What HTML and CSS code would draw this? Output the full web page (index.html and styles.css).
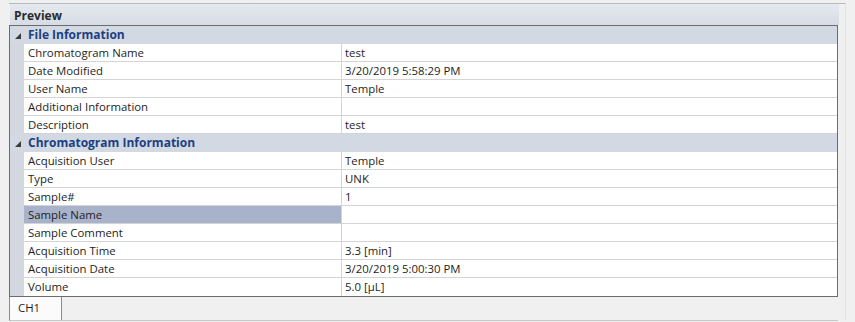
FILE: index.html
```html
<!DOCTYPE html>
<html lang="en">

<head>
    <meta charset="UTF-8" />
    <title>Preview</title>
    <link rel="stylesheet" href="styles.css">
</head>

<body>
    <div class="frame">
        <div class="title">Preview</div>
        <div class="grid">
            <div class="cat">
                <span class="gutter"><svg width="6" height="6" viewBox="0 0 6 6"><polygon points="6,0 6,6 0,6" fill="#3c3c3c"/></svg></span>
                <span class="cat-text">File Information</span>
            </div>
            <div class="row"><span class="gutter"></span><span class="name">Chromatogram Name</span><span class="value">test</span></div>
            <div class="row"><span class="gutter"></span><span class="name">Date Modified</span><span class="value">3/20/2019 5:58:29 PM</span></div>
            <div class="row"><span class="gutter"></span><span class="name">User Name</span><span class="value">Temple</span></div>
            <div class="row"><span class="gutter"></span><span class="name">Additional Information</span><span class="value"></span></div>
            <div class="row"><span class="gutter"></span><span class="name">Description</span><span class="value">test</span></div>
            <div class="cat">
                <span class="gutter"><svg width="6" height="6" viewBox="0 0 6 6"><polygon points="6,0 6,6 0,6" fill="#3c3c3c"/></svg></span>
                <span class="cat-text">Chromatogram Information</span>
            </div>
            <div class="row"><span class="gutter"></span><span class="name">Acquisition User</span><span class="value">Temple</span></div>
            <div class="row"><span class="gutter"></span><span class="name">Type</span><span class="value">UNK</span></div>
            <div class="row"><span class="gutter"></span><span class="name">Sample#</span><span class="value">1</span></div>
            <div class="row selected"><span class="gutter"></span><span class="name">Sample Name</span><span class="value"></span></div>
            <div class="row"><span class="gutter"></span><span class="name">Sample Comment</span><span class="value"></span></div>
            <div class="row"><span class="gutter"></span><span class="name">Acquisition Time</span><span class="value">3.3 [min]</span></div>
            <div class="row"><span class="gutter"></span><span class="name">Acquisition Date</span><span class="value">3/20/2019 5:00:30 PM</span></div>
            <div class="row last"><span class="gutter"></span><span class="name">Volume</span><span class="value">5.0 [µL]</span></div>
        </div>
        <div class="tabs">
            <div class="tab">CH1</div>
        </div>
    </div>
</body>

</html>
```

FILE: styles.css
```css
* {
    margin: 0;
    padding: 0;
    box-sizing: border-box;
}

body {
    background: #f0f0f0;
    font-family: 'Open Sans', 'Noto Sans', sans-serif;
    font-size: 11.4px;
    color: #1e1e1e;
    height: 322px;
    overflow: hidden;
}

.frame {
    margin: 3px 0 0 9px;
    width: 837px;
    border-top: 1px solid #b4bac4;
    border-right: 1px solid #e4e4e4;
}

.title {
    height: 21px;
    margin-left: 1px;
    width: 829px;
    padding-left: 4px;
    line-height: 23px;
    font-size: 12px;
    font-weight: 700;
    color: #2a2a2a;
    background: linear-gradient(#e6e9ef, #d6dce5);
}

.grid {
    width: 829px;
    border: 1px solid #6c6c6c;
    background: #fff;
}

.row,
.cat {
    display: flex;
    height: 18px;
    line-height: 16px;
}

.cat {
    background: #d3d9e2;
}

.gutter {
    width: 14px;
    flex: none;
    background: #d3d8e0;
    display: flex;
    align-items: center;
    justify-content: center;
}

.cat .gutter {
    background: none;
    padding-left: 1px;
    padding-top: 1px;
}

.cat-text {
    padding-left: 4px;
    font-size: 12px;
    font-weight: 700;
    color: #1c3f82;
    line-height: 18px;
}

.name {
    width: 318px;
    flex: none;
    padding: 1px 0 0 4px;
    border-right: 1px solid #d4d4d4;
    border-bottom: 1px solid #d4d4d4;
    white-space: nowrap;
}

.value {
    flex: 1;
    padding: 1px 0 0 3px;
    border-bottom: 1px solid #d4d4d4;
}

.selected .name {
    background: #a9b2cb;
}

.last .name,
.last .value {
    border-bottom: none;
}

.tabs {
    display: flex;
    height: 24px;
    border-left: 1px solid #8a8a8a;
    border-bottom: 1px solid #c8c8c8;
    width: 829px;
}

.tab {
    width: 52px;
    background: #fbfbfb;
    border-right: 1px solid #8a8a8a;
    padding-left: 8px;
    line-height: 22px;
}
```
